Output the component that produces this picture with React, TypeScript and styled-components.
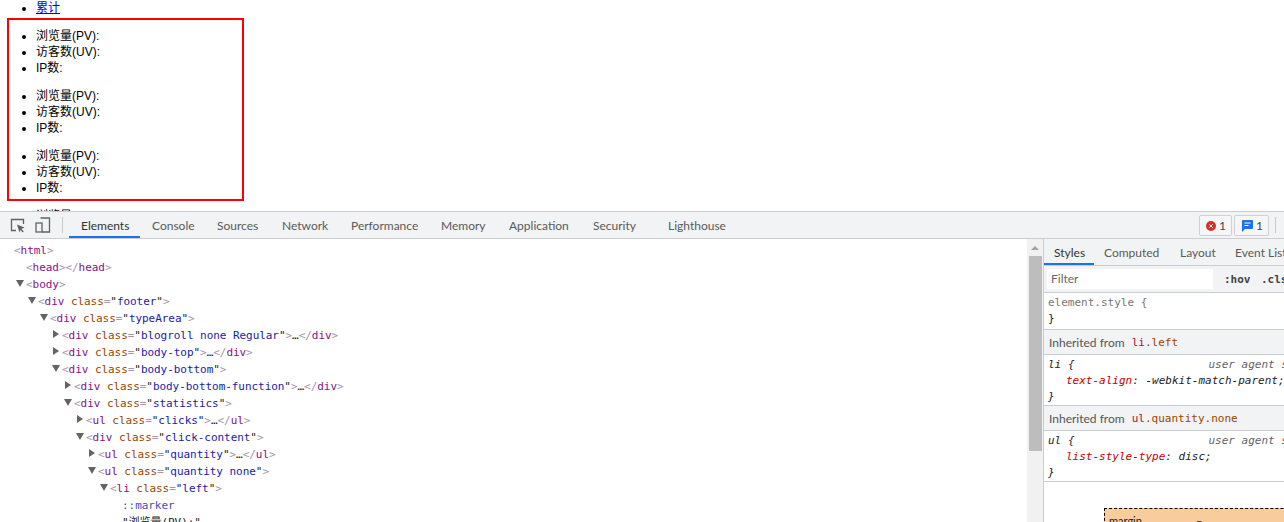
import React from "react";
import styled, { createGlobalStyle } from "styled-components";

const GlobalStyle = createGlobalStyle`
html, body {
  margin: 0;
  padding: 0;
  background: #fff;
}
`;

const uiFont = `Lato, "Open Sans", "Liberation Sans", sans-serif`;
const monoFont = `"DejaVu Sans Mono", "Liberation Mono", "Noto Sans CJK SC", monospace`;

const Screen = styled.div`
  width: 1284px;
  height: 522px;
  display: flex;
  flex-direction: column;
  overflow: hidden;
`;

const Page = styled.div`
  height: 211px;
  flex: none;
  overflow: hidden;
  font: 12px/16px "Liberation Sans", "Noto Sans CJK SC", sans-serif;
  color: #000;
  padding-left: 7px;
`;

const TopList = styled.ul`
  margin: 0 0 3px;
  padding-left: 29px;
  height: 15px;
  a {
    color: #0000ee;
  }
`;

const RedBox = styled.div`
  width: 233px;
  border: 2px solid #f00;
  padding: 8px 0 3px;
`;

const Quantity = styled.ul`
  margin: 0 0 12px;
  padding-left: 27px;
  &:last-child {
    margin-bottom: 0;
  }
`;

const OverflowList = styled.ul`
  margin: 7px 0 0;
  padding-left: 29px;
`;

const Devtools = styled.div`
  flex: 1;
  min-height: 0;
  display: flex;
  flex-direction: column;
  border-top: 1px solid #cbcdd1;
`;

const Toolbar = styled.div`
  height: 26px;
  flex: none;
  display: flex;
  align-items: stretch;
  background: #f1f3f4;
  border-bottom: 1px solid #cbcdd1;
`;

const ToolIcon = styled.div<{ $first?: boolean }>`
  width: 26px;
  margin-left: ${(p) => (p.$first ? "4px" : "0")};
  display: flex;
  align-items: center;
  justify-content: center;
`;

const Divider = styled.div<{ $left: number; $right: number }>`
  width: 1px;
  height: 16px;
  margin: 5px ${(p) => p.$right}px 0 ${(p) => p.$left}px;
  background: #c8cacc;
`;

const Tab = styled.div<{ $active?: boolean; $w: number; $pad?: number }>`
  width: ${(p) => p.$w}px;
  flex: none;
  padding-left: ${(p) => p.$pad ?? 12}px;
  box-sizing: border-box;
  display: flex;
  align-items: center;
  font: 12px ${uiFont};
  color: ${(p) => (p.$active ? "#333" : "#5a5a5a")};
  box-shadow: ${(p) => (p.$active ? "inset 0 -2px 0 #1a73e8" : "none")};
  white-space: nowrap;
`;

const Spacer = styled.div`
  flex: 1;
`;

const Badge = styled.div<{ $left: number }>`
  height: 19px;
  margin: 3px 2px 0 0;
  padding: 0 5px 0 ${(p) => p.$left}px;
  display: flex;
  align-items: center;
  gap: 3px;
  background: #f5f6f7;
  border: 1px solid #cfd1d4;
  border-radius: 2px;
  font: 12px ${uiFont};
  color: #444;
`;

const Panels = styled.div`
  flex: 1;
  min-height: 0;
  display: flex;
`;

const Tree = styled.div`
  width: 1027px;
  flex: none;
  padding-top: 3px;
  overflow: hidden;
  font: 11px/17px ${monoFont};
  letter-spacing: -0.05px;
  color: #222;
  white-space: nowrap;
`;

const Row = styled.div<{ $depth: number }>`
  height: 17px;
  padding-left: ${(p) => 14 + p.$depth * 12}px;
`;

const Arrow = styled.span<{ $open?: boolean }>`
  display: inline-block;
  width: 0;
  height: 0;
  vertical-align: 1px;
  ${(p) =>
    p.$open
      ? `margin: 0 2.5px 0 -10.5px; border-left: 4px solid transparent; border-right: 4px solid transparent; border-top: 7px solid #646464;`
      : `margin: 0 3px 0 -9px; border-top: 4px solid transparent; border-bottom: 4px solid transparent; border-left: 6px solid #646464;`}
`;

const Punct = styled.span`
  color: #a894a6;
`;
const TagName = styled.span`
  color: #881280;
`;
const AttrName = styled.span`
  color: #994500;
`;
const AttrValue = styled.span`
  color: #1a1aa6;
`;
const Pseudo = styled.span`
  color: #4a4ac0;
`;

const Scrollbar = styled.div`
  width: 16px;
  flex: none;
  background: #f1f1f1;
  display: flex;
  flex-direction: column;
  align-items: center;
`;

const ScrollArrow = styled.div`
  height: 17px;
  flex: none;
  display: flex;
  align-items: center;
  justify-content: center;
  &::before {
    content: "";
    border-left: 4px solid transparent;
    border-right: 4px solid transparent;
    border-bottom: 4px solid #a3a3a3;
  }
`;

const ScrollThumb = styled.div`
  width: 13px;
  height: 195px;
  background: #bdbdbd;
`;

const Sidebar = styled.div`
  flex: 1;
  min-width: 0;
  border-left: 1px solid #cbcdd1;
  overflow: hidden;
  display: flex;
  flex-direction: column;
`;

const SideTabs = styled.div`
  height: 26px;
  flex: none;
  display: flex;
  align-items: stretch;
  background: #f1f3f4;
  border-bottom: 1px solid #cbcdd1;
`;

const FilterBar = styled.div`
  height: 26px;
  flex: none;
  display: flex;
  align-items: center;
  padding-left: 3px;
  background: #f1f3f4;
  border-bottom: 1px solid #cbcdd1;
`;

const FilterInput = styled.div`
  width: 162px;
  height: 20px;
  flex: none;
  padding-left: 4px;
  margin-right: 11px;
  background: #fff;
  font: 12px/20px ${uiFont};
  color: #666;
`;

const FilterButton = styled.span`
  font: bold 11px ${monoFont};
  color: #444;
  width: 37px;
  flex: none;
`;

const Rule = styled.div<{ $compact?: boolean }>`
  flex: none;
  padding: ${(p) => (p.$compact ? "2px 4px 0" : "2px 4px")};
  border-bottom: 1px solid #cbcdd1;
  font: 11px/16px ${monoFont};
  color: #222;
  white-space: nowrap;
  overflow: hidden;
`;

const Selector = styled.div<{ $italic?: boolean }>`
  display: flex;
  font-style: ${(p) => (p.$italic ? "italic" : "normal")};
  color: ${(p) => (p.$italic ? "#222" : "#777")};
`;

const Origin = styled.span`
  margin-left: 134px;
  color: #5f6368;
`;

const Declaration = styled.div`
  padding-left: 18px;
  font-style: italic;
`;

const PropName = styled.span`
  color: #c80000;
`;

const Inherited = styled.div`
  height: 24px;
  flex: none;
  padding-left: 5px;
  display: flex;
  align-items: center;
  gap: 7px;
  background: #f1f3f4;
  border-bottom: 1px solid #cbcdd1;
  font: 12px ${uiFont};
  color: #555;
  white-space: nowrap;
`;

const InheritedRef = styled.span`
  font: 11px ${monoFont};
  color: #994500;
  b {
    font-weight: normal;
    color: #b0103a;
  }
`;

const BoxModel = styled.div`
  flex: 1;
  padding: 26px 0 0 60px;
`;

const MarginBox = styled.div`
  height: 60px;
  width: 240px;
  display: flex;
  gap: 54px;
  padding: 5px 4px;
  background: #f9cc9d;
  border: 1px dashed #000;
  font: 11px ${uiFont};
  color: #222;
`;

const InspectIcon = () => (
  <svg width="15" height="15" viewBox="0 0 15 15" fill="none">
    <path d="M6 12.5H1.5V1.5H13.5V6" stroke="#5f6368" strokeWidth="1.3" />
    <path d="M7 6.5L14.5 9.5L11.5 11L13.8 13.5L12.8 14.5L10.5 12L9.5 14.5Z" fill="#5f6368" />
  </svg>
);

const DeviceIcon = () => (
  <svg width="16" height="16" viewBox="0 0 16 16" fill="none">
    <path d="M5.5 1H14.5V15H7" stroke="#5f6368" strokeWidth="1.3" />
    <rect x="1" y="6" width="6" height="9" stroke="#5f6368" strokeWidth="1.3" />
  </svg>
);

const ErrorIcon = () => (
  <svg width="10" height="10" viewBox="0 0 10 10">
    <circle cx="5" cy="5" r="5" fill="#d93025" />
    <path d="M3.3 3.3L6.7 6.7M6.7 3.3L3.3 6.7" stroke="#fff" strokeWidth="1" />
  </svg>
);

const MessageIcon = () => (
  <svg width="11" height="12" viewBox="0 0 11 12">
    <path d="M0 1a1 1 0 0 1 1-1h9a1 1 0 0 1 1 1v7a1 1 0 0 1-1 1H3L0 12Z" fill="#1a73e8" />
    <path d="M2.5 3H8.5M2.5 5.5H6.5" stroke="#fff" strokeWidth="1" />
  </svg>
);

const Stats = () => (
  <Quantity>
    <li>浏览量(PV):</li>
    <li>访客数(UV):</li>
    <li>IP数:</li>
  </Quantity>
);

interface Attr {
  depth: number;
  tag: string;
  cls?: string;
  open?: boolean;
  collapsed?: boolean;
}

const rows: Attr[] = [
  { depth: 1, tag: "body", open: true },
  { depth: 2, tag: "div", cls: "footer", open: true },
  { depth: 3, tag: "div", cls: "typeArea", open: true },
  { depth: 4, tag: "div", cls: "blogroll none Regular", collapsed: true },
  { depth: 4, tag: "div", cls: "body-top", collapsed: true },
  { depth: 4, tag: "div", cls: "body-bottom", open: true },
  { depth: 5, tag: "div", cls: "body-bottom-function", collapsed: true },
  { depth: 5, tag: "div", cls: "statistics", open: true },
  { depth: 6, tag: "ul", cls: "clicks", collapsed: true },
  { depth: 6, tag: "div", cls: "click-content", open: true },
  { depth: 7, tag: "ul", cls: "quantity", collapsed: true },
  { depth: 7, tag: "ul", cls: "quantity none", open: true },
  { depth: 8, tag: "li", cls: "left", open: true },
];

const TreeRow = ({ depth, tag, cls, open, collapsed }: Attr) => (
  <Row $depth={depth}>
    <Arrow $open={open} />
    <Punct>&lt;</Punct>
    <TagName>{tag}</TagName>
    {cls && (
      <>
        {" "}
        <AttrName>class</AttrName>
        <Punct>=</Punct>"<AttrValue>{cls}</AttrValue>"
      </>
    )}
    <Punct>&gt;</Punct>
    {collapsed && (
      <>
        …<Punct>&lt;/</Punct>
        <TagName>{tag}</TagName>
        <Punct>&gt;</Punct>
      </>
    )}
  </Row>
);

export default function App() {
  return (
    <Screen>
      <GlobalStyle />
      <Page>
        <TopList>
          <li>
            <a href="#total">累计</a>
          </li>
        </TopList>
        <RedBox>
          <Stats />
          <Stats />
          <Stats />
        </RedBox>
        <OverflowList>
          <li>浏览量(PV):</li>
        </OverflowList>
      </Page>
      <Devtools>
        <Toolbar>
          <ToolIcon $first>
            <InspectIcon />
          </ToolIcon>
          <ToolIcon>
            <DeviceIcon />
          </ToolIcon>
          <Divider $left={6} $right={6} />
          <Tab $active $w={71}>Elements</Tab>
          <Tab $w={65}>Console</Tab>
          <Tab $w={65}>Sources</Tab>
          <Tab $w={69}>Network</Tab>
          <Tab $w={90}>Performance</Tab>
          <Tab $w={68}>Memory</Tab>
          <Tab $w={84}>Application</Tab>
          <Tab $w={75}>Security</Tab>
          <Tab $w={90}>Lighthouse</Tab>
          <Spacer />
          <Badge $left={6}>
            <ErrorIcon />1
          </Badge>
          <Badge $left={7}>
            <MessageIcon />1
          </Badge>
          <Divider $left={4} $right={8} />
        </Toolbar>
        <Panels>
          <Tree>
            <Row $depth={0}>
              <Punct>&lt;</Punct>
              <TagName>html</TagName>
              <Punct>&gt;</Punct>
            </Row>
            <Row $depth={1}>
              <Punct>&lt;</Punct>
              <TagName>head</TagName>
              <Punct>&gt;&lt;/</Punct>
              <TagName>head</TagName>
              <Punct>&gt;</Punct>
            </Row>
            {rows.map((r) => (
              <TreeRow key={`${r.depth}-${r.cls ?? r.tag}`} {...r} />
            ))}
            <Row $depth={9}>
              <Pseudo>::marker</Pseudo>
            </Row>
            <Row $depth={9}>"浏览量(PV):"</Row>
          </Tree>
          <Scrollbar>
            <ScrollArrow />
            <ScrollThumb />
          </Scrollbar>
          <Sidebar>
            <SideTabs>
              <Tab $active $w={50} $pad={10}>Styles</Tab>
              <Tab $w={76} $pad={10}>Computed</Tab>
              <Tab $w={55} $pad={10}>Layout</Tab>
              <Tab $w={80} $pad={10}>Event Listeners</Tab>
            </SideTabs>
            <FilterBar>
              <FilterInput>Filter</FilterInput>
              <FilterButton>:hov</FilterButton>
              <FilterButton>.cls</FilterButton>
            </FilterBar>
            <Rule>
              <Selector>element.style {"{"}</Selector>
              <div>{"}"}</div>
            </Rule>
            <Inherited>
              Inherited from
              <InheritedRef>
                <b>li</b>.left
              </InheritedRef>
            </Inherited>
            <Rule $compact>
              <Selector $italic>
                li {"{"}
                <Origin>user agent stylesheet</Origin>
              </Selector>
              <Declaration>
                <PropName>text-align</PropName>: -webkit-match-parent;
              </Declaration>
              <Selector $italic>{"}"}</Selector>
            </Rule>
            <Inherited>
              Inherited from
              <InheritedRef>
                <b>ul</b>.quantity.none
              </InheritedRef>
            </Inherited>
            <Rule $compact>
              <Selector $italic>
                ul {"{"}
                <Origin>user agent stylesheet</Origin>
              </Selector>
              <Declaration>
                <PropName>list-style-type</PropName>: disc;
              </Declaration>
              <Selector $italic>{"}"}</Selector>
            </Rule>
            <BoxModel>
              <MarginBox>
                <span>margin</span>
                <span>–</span>
              </MarginBox>
            </BoxModel>
          </Sidebar>
        </Panels>
      </Devtools>
    </Screen>
  );
}
